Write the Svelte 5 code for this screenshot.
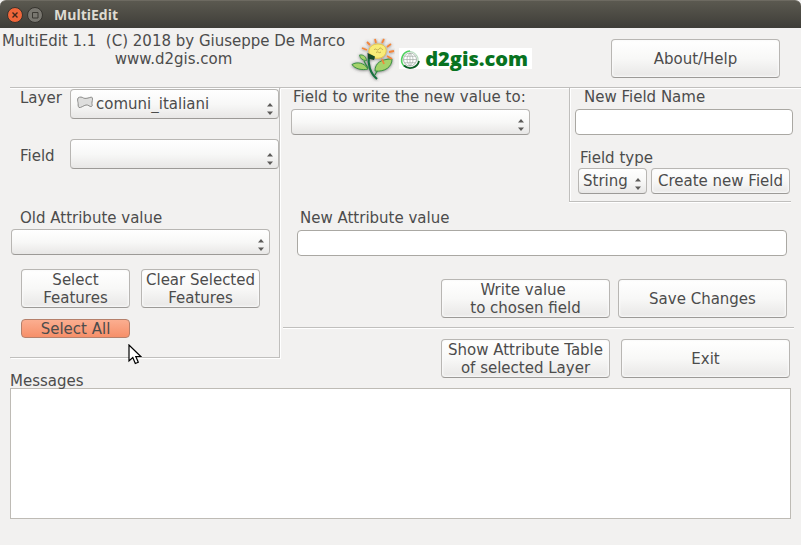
<script>
  let layer = $state('comuni_italiani');
  let fieldType = $state('String');
</script>

{#snippet arrows()}
  <svg class="arrows" width="8" height="14" viewBox="0 0 8 14" aria-hidden="true">
    <path d="M4 1 7 4.500H1ZM4 13 1 9.500h6Z" fill="#5c5b59" />
  </svg>
{/snippet}

<div class="window">
  <div class="titlebar">
    <button class="dot close" aria-label="Close">
      <svg width="16" height="16" viewBox="0 0 16 16"><circle cx="8" cy="8" r="7.500" fill="#f0663a" stroke="#35332e" /><path d="M5.500 5.500l5 5m0-5l-5 5" stroke="#41281c" stroke-width="1.400" /></svg>
    </button>
    <button class="dot" aria-label="Maximize">
      <svg width="16" height="16" viewBox="0 0 16 16"><circle cx="8" cy="8" r="7.500" fill="#797770" stroke="#35332e" /><path d="M5.500 5.500h5.500v5.500H5.500z" fill="none" stroke="#3b3933" /></svg>
    </button>
    <span class="title">MultiEdit</span>
  </div>

  <header>
    <p class="credits">MultiEdit 1.1&nbsp; (C) 2018 by Giuseppe De Marco<br />www.d2gis.com</p>
    <svg class="flower" width="46" height="44" viewBox="0 0 46 44" aria-hidden="true">
      <defs><filter id="soft" x="-20%" y="-20%" width="140%" height="140%"><feDropShadow dx="0" dy="0.500" stdDeviation="1.500" flood-color="#444" flood-opacity="0.75" /></filter></defs>
      <g filter="url(#soft)">
        <path d="M20 18c-1.500 8 1 17 8 23" fill="none" stroke="#14703f" stroke-width="2.200" />
        <path d="M19 30c-2-3-3-5-4-7M26 37c2-5 5-7 8-9" fill="none" stroke="#2b8a3c" stroke-width="1.200" />
        <path d="M3 26.500c5-3 12-2 16 4.500-6 1.500-13 0-16-4.500Z" fill="#a5d36b" stroke="#2f8a3c" stroke-width="0.900" />
        <path d="M26 33c0-8 6-12 17-12 0 8-7 13-17 12Z" fill="#a5d36b" stroke="#2f8a3c" stroke-width="0.900" />
        <path d="M10.500 17c4-.5 6.500 1.500 7 5.500-4 0-6.500-2-7-5.500Z" fill="#a5d36b" stroke="#2f8a3c" stroke-width="0.800" />
        <path d="M27 5l-1-4M33 5l2-4M38 9l4-3M40 14l5-1M38 18l5 3M33 21l2 5M21 7l-3-3M18 12l-5-2" stroke="#f2863b" stroke-width="1.800" />
        <path d="M20 15c-1-6 4-9 9-9 6 0 9 4 8 8-1 5-6 7-11 6Z" fill="#f8ec78" stroke="#e8c64a" />
        <path d="m18.500 15 7.500 3.500-1 3.500-6-1.500Z" fill="#124a29" />
      </g>
      <path d="M25 12c2-3 3 2 5-1s3 2 4 0M27 14.500c2-2 3 1.500 5-.5" fill="none" stroke="#b39c48" stroke-width="0.800" />
    </svg>
    <a class="logo" href="http://www.d2gis.com">
      <svg width="22" height="20" viewBox="0 0 22 20" aria-hidden="true">
        <path d="M5 17A9 9 0 0 1 11 2" fill="none" stroke="#4fd05f" stroke-width="1.600" />
        <path d="M11 2.500a8.500 8.500 0 0 1 8 10" fill="none" stroke="#8fc99a" stroke-width="0.800" />
        <path d="M5 16.500A9 9 0 0 0 20 12" fill="none" stroke="#0b5d24" stroke-width="1.800" />
        <circle cx="11" cy="10.500" r="6.500" fill="#fff" stroke="#8d9a91" stroke-width="0.700" />
        <path d="M11 4v13M4.500 10.500h13M5.800 7.300h10.400M5.800 13.700h10.400M11 4c-4 4-4 9 0 13M11 4c4 4 4 9 0 13" fill="none" stroke="#9aa59d" stroke-width="0.600" />
      </svg>
      <span>d2gis.com</span>
    </a>
    <button class="btn about">About/Help</button>
  </header>

  <main>
    <section class="source">
      <div class="row">
        <label for="layer">Layer</label>
        <div class="combo tall">
          <svg class="shape" width="17" height="13" viewBox="0 0 17 13" aria-hidden="true">
            <path d="M1 2c2-1.500 4-1 5.500 0s5 0 8-1c1.500 1 1 3 .5 5s1 4-.5 4.500c-2 .5-3-2-5.500-1.500S4 12 2 11.500C.5 10 1.500 8 1 6.500S.500 3 1 2Z" fill="#dededd" stroke="#8b8b89" />
          </svg>
          <select id="layer" class="with-icon" bind:value={layer}><option>comuni_italiani</option></select>
          {@render arrows()}
        </div>
      </div>
      <div class="row">
        <label for="field">Field</label>
        <div class="combo tall"><select id="field"><option></option></select>{@render arrows()}</div>
      </div>
      <div class="old">
        <label for="old">Old Attribute value</label>
        <div class="combo"><select id="old"><option></option></select>{@render arrows()}</div>
      </div>
      <div class="selection">
        <button class="btn">Select<br />Features</button>
        <button class="btn">Clear Selected<br />Features</button>
        <button class="btn accent">Select All</button>
      </div>
    </section>

    <div class="target">
      <div class="fields">
        <section class="write">
          <label for="target">Field to write the new value to:</label>
          <div class="combo"><select id="target"><option></option></select>{@render arrows()}</div>
        </section>
        <section class="create">
          <div class="create-body">
            <label class="name-label" for="name">New Field Name</label>
            <input id="name" type="text" />
            <label class="type-label" for="type">Field type</label>
            <div class="type-row">
              <div class="combo type">
                <select id="type" bind:value={fieldType}><option>String</option></select>
                {@render arrows()}
              </div>
              <button class="btn small">Create new Field</button>
            </div>
          </div>
        </section>
      </div>
      <section class="value">
        <label for="value">New Attribute value</label>
        <input id="value" type="text" />
        <div class="actions">
          <button class="btn">Write value&nbsp;<br />to chosen field</button>
          <button class="btn">Save Changes</button>
        </div>
      </section>
      <div class="actions last">
        <button class="btn">Show Attribute Table<br />of selected Layer</button>
        <button class="btn">Exit</button>
      </div>
    </div>
  </main>

  <section class="messages">
    <label for="messages">Messages</label>
    <textarea id="messages"></textarea>
  </section>

  <svg class="pointer" width="14" height="21" viewBox="0 0 14 21" aria-hidden="true">
    <path d="M1 1v16l3.800-3.500L7.300 19.500l3-1.300L7.800 12.500h5Z" fill="#fff" stroke="#000" stroke-width="1.200" />
  </svg>
</div>

<style>
  :global(body) { background: #f2f1f0; }
  * { box-sizing: border-box; }
  .window {
    position: relative;
    min-height: 100vh;
    background: #f2f1f0;
    color: #4c4c4c;
    font: 15px/18px "DejaVu Sans", sans-serif;
  }
  button, input, select, textarea { font: inherit; color: inherit; margin: 0; }
  label { display: block; }

  .titlebar {
    display: flex;
    align-items: center;
    gap: 4px;
    height: 28px;
    padding-left: 7px;
    background: linear-gradient(#5b5950, #3e3d38);
    border-top: 1px solid #6d6a61;
    border-radius: 6px 6px 0 0;
  }
  .dot { display: flex; padding: 0; border: 0; background: none; }
  .title { margin-left: 7px; font: bold 14px/18px "Open Sans", sans-serif; color: #dfdbd2; }

  header { display: flex; align-items: flex-start; height: 59px; padding: 4px 21px 0 2px; }
  .credits { margin: 0; text-align: center; white-space: nowrap; }
  .flower { flex: none; margin: 6px 4px 0 4px; }
  .logo {
    display: flex;
    align-items: center;
    height: 21px;
    margin-top: 16px;
    padding: 0 4px 0 0;
    gap: 4px;
    background: #fff;
    color: #087321;
    font: 800 20px/20px "Open Sans", sans-serif;
    text-decoration: none;
  }
  .btn {
    height: 39px;
    padding: 0;
    border: 1px solid #b8b6b3;
    border-bottom-color: #9c9a97;
    border-radius: 4px;
    background: linear-gradient(#fff, #f8f8f7 50%, #e8e7e6);
    box-shadow: inset 0 0 2px 1px #fafafa;
    white-space: nowrap;
  }
  .about { width: 169px; margin: 7px 0 0 auto; }

  .combo { position: relative; height: 26px; }
  .combo.tall { height: 30px; }
  select {
    appearance: none;
    width: 100%;
    height: 100%;
    padding: 0 4px;
    border: 1px solid #b8b6b3;
    border-bottom-color: #9c9a97;
    border-radius: 4px;
    background: linear-gradient(#fff, #f8f8f7 50%, #e8e7e6);
  }
  select.with-icon { padding-left: 25px; }
  .arrows { position: absolute; right: 5px; bottom: 3px; pointer-events: none; }
  .shape { position: absolute; left: 7px; top: 7px; pointer-events: none; }
  input {
    display: block;
    width: 100%;
    height: 26px;
    padding: 0 5px;
    border: 1px solid #aaa8a3;
    border-radius: 4px;
    background: #fff;
  }

  main {
    display: grid;
    grid-template-columns: 271px 1fr;
    margin-left: 10px;
    border-top: 1px solid #c0bfbd;
  }
  .source {
    height: 270px;
    padding-top: 1px;
    border-right: 1px solid #c0bfbd;
    border-bottom: 1px solid #c0bfbd;
    box-shadow: inset 0 1px #fff, 1px 1px #fff;
    margin-right: 1px;
  }
  .row { display: grid; grid-template-columns: 50px 1fr; height: 50px; padding-left: 10px; }
  .row + .row label { padding-top: 8px; }
  .old { margin-top: 20px; padding-right: 9px; }
  .old label { padding: 0 10px 2px; }
  .old .combo { margin-left: 1px; }
  .selection {
    display: grid;
    grid-template-columns: 109px 119px;
    gap: 11px;
    padding: 14px 0 0 11px;
  }
  .accent {
    height: 19px;
    line-height: 18px;
    border-color: #b5806b;
    background: linear-gradient(#fbae90, #f68f69);
    box-shadow: none;
  }

  .target { box-shadow: inset 0 1px #fff; }
  .fields { display: grid; grid-template-columns: 1fr 232px; }
  .write { padding: 0 39px 0 10px; }
  .write label { padding: 0 2px 3px; }
  .create { padding-right: 10px; }
  .create-body {
    height: 114px;
    border-left: 1px solid #c0bfbd;
    border-bottom: 1px solid #c0bfbd;
    box-shadow: inset 1px 1px #fff, 0 1px #fff;
    padding-left: 5px;
  }
  .create-body input { width: calc(100% + 2px); }
  .name-label { padding: 0 9px 3px; }
  .type-label { padding: 14px 5px 1px; }
  .type-row { display: flex; gap: 4px; padding: 0 1px 0 3px; }
  .type { width: 69px; }
  .small { flex: 1; height: 26px; }

  .value {
    margin: 0 7px 0 2px;
    padding: 7px 7px 9px 14px;
    border-bottom: 1px solid #c0bfbd;
    box-shadow: 0 1px #fff;
  }
  .value label { padding: 0 3px 3px; }
  .actions { display: grid; grid-template-columns: 169px 169px; justify-content: end; gap: 8px; }
  .value .actions { margin-top: 23px; }
  .last { gap: 11px; padding: 11px 11px 0 0; }

  .messages { padding: 0 10px; }
  .messages label { margin-top: -6px; width: max-content; }
  textarea {
    display: block;
    width: 100%;
    height: 131px;
    margin-top: -2px;
    border: 1px solid #bebbb5;
    background: #fff;
    resize: none;
  }
  .pointer { position: absolute; left: 128px; top: 344px; pointer-events: none; }
</style>
